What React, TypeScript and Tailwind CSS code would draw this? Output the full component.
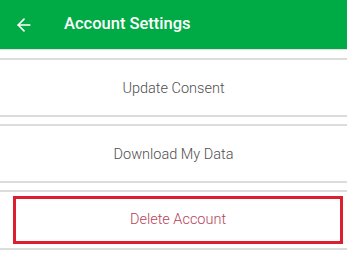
import { ArrowLeft } from "lucide-react";

const rows = ["Update Consent", "Download My Data"];

export default function App() {
  return (
    <div className="h-[269px] w-[347px] overflow-hidden bg-white font-['Roboto',sans-serif]">
      {/* Toolbar */}
      <div className="flex h-[49px] items-center bg-[#00ab45] shadow-[0_1px_1px_rgba(0,0,0,0.12)]">
        <ArrowLeft size={20} strokeWidth={2} className="ml-[14px] text-white" />
        <h1 className="ml-[30px] text-[16.5px] font-medium text-white">Account Settings</h1>
      </div>

      <div className="mt-[9px] space-y-[7px]">
        {rows.map((r) => (
          <div
            key={r}
            className="flex h-[59px] items-center justify-center border-y-2 border-[#dcdcdc] pt-[2px] text-[14.5px] font-light text-[#4f4f4f]"
          >
            {r}
          </div>
        ))}
        <div className="border-y-2 border-[#dcdcdc] py-[4px] pl-[13px] pr-[4px]">
          <div className="flex h-[48px] items-center justify-center border-[3px] border-[#dc1f2e] text-[14.5px] font-light text-[#b5445a]">
            Delete Account
          </div>
        </div>
      </div>
    </div>
  );
}
